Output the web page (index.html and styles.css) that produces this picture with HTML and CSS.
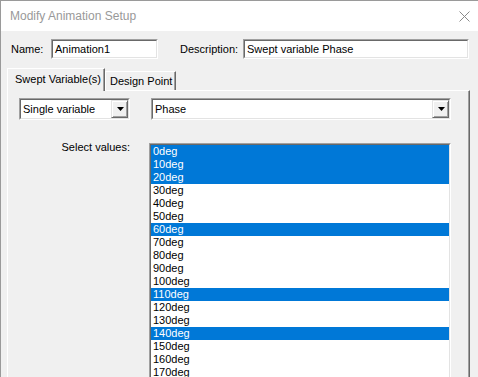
FILE: index.html
```html
<!DOCTYPE html>
<html>
<head>
<meta charset="utf-8">
<link rel="stylesheet" href="styles.css">
</head>
<body>
<div class="window">
  <div class="titlebar">
    <span class="title">Modify Animation Setup</span>
    <svg class="close" width="11" height="11" viewBox="0 0 11 11"><path d="M0.5 0.5 L10.5 10.5 M10.5 0.5 L0.5 10.5" stroke="#8a8a8a" stroke-width="1" fill="none"/></svg>
  </div>
  <div class="content">
    <div class="name-row">
      <span class="lbl name-lbl">Name:</span>
      <div class="sunken field name-field"><div class="sunken-in"><span class="ftext">Animation1</span></div></div>
      <span class="lbl desc-lbl">Description:</span>
      <div class="sunken field desc-field"><div class="sunken-in"><span class="ftext">Swept variable Phase</span></div></div>
    </div>
    <div class="tabs">
      <div class="tab active">Swept Variable(s)</div>
      <div class="tab">Design Point</div>
    </div>
    <div class="panel">
      <div class="combo-row">
        <div class="sunken combo combo1"><div class="sunken-in combo-in"><span class="ctext">Single variable</span><span class="dd"><svg width="7" height="4" viewBox="0 0 7 4"><path d="M0 0 H7 L3.5 4 Z" fill="#000"/></svg></span></div></div>
        <div class="sunken combo combo2"><div class="sunken-in combo-in"><span class="ctext">Phase</span><span class="dd"><svg width="7" height="4" viewBox="0 0 7 4"><path d="M0 0 H7 L3.5 4 Z" fill="#000"/></svg></span></div></div>
      </div>
      <div class="values-row">
        <span class="lbl values-lbl">Select values:</span>
        <div class="sunken listbox"><div class="sunken-in list-in">
          <div class="item sel">0deg</div>
          <div class="item sel">10deg</div>
          <div class="item sel">20deg</div>
          <div class="item">30deg</div>
          <div class="item">40deg</div>
          <div class="item">50deg</div>
          <div class="item sel">60deg</div>
          <div class="item">70deg</div>
          <div class="item">80deg</div>
          <div class="item">90deg</div>
          <div class="item">100deg</div>
          <div class="item sel">110deg</div>
          <div class="item">120deg</div>
          <div class="item">130deg</div>
          <div class="item sel">140deg</div>
          <div class="item">150deg</div>
          <div class="item">160deg</div>
          <div class="item">170deg</div>
          <div class="item">180deg</div>
          <div class="item">190deg</div>
          <div class="item">200deg</div>
        </div></div>
      </div>
    </div>
  </div>
</div>
</body>
</html>
```
FILE: styles.css
```css
html, body {
  margin: 0;
  padding: 0;
  width: 478px;
  height: 377px;
  overflow: hidden;
  background: #f0f0f0;
}
body {
  font-family: "Liberation Sans", Arial, sans-serif;
  font-size: 11px;
  color: #000;
}
.window {
  width: 477px;
  height: 376px;
  border-top: 1px solid #9a9a9a;
  border-left: 1px solid #9a9a9a;
  overflow: hidden;
  background: #f0f0f0;
}
.titlebar {
  height: 30px;
  background: #fff;
  display: flex;
  align-items: center;
  justify-content: space-between;
  padding-left: 9px;
}
.title {
  font-size: 12px;
  line-height: 30px;
  color: #999;
}
.close {
  margin-right: 8px;
  margin-top: 1px;
}
.content {
  padding-top: 8px;
}
.name-row {
  display: flex;
  align-items: center;
  height: 20px;
  padding-left: 10px;
}
.lbl {
  line-height: 13px;
  white-space: nowrap;
}
.name-lbl { width: 40px; flex: none; }
.desc-lbl { width: 63px; flex: none; margin-left: 22px; }
.sunken {
  box-sizing: border-box;
  border: 1px solid;
  border-color: #a0a0a0 #fff #fff #a0a0a0;
  background: #fff;
  flex: none;
}
.sunken-in {
  box-sizing: border-box;
  height: 100%;
  border: 1px solid;
  border-color: #696969 #e3e3e3 #e3e3e3 #696969;
}
.field { height: 20px; }
.name-field { width: 107px; }
.desc-field { width: 226px; }
.ftext {
  display: block;
  line-height: 16px;
  padding-left: 2px;
  white-space: nowrap;
}
.tabs {
  display: flex;
  align-items: flex-start;
  height: 22px;
  margin-top: 9px;
  margin-left: 6px;
  position: relative;
  z-index: 1;
}
.tab {
  box-sizing: border-box;
  background: #f0f0f0;
  border-top: 1px solid #fff;
  border-left: 1px solid #fff;
  border-right: 1px solid #696969;
  box-shadow: inset -1px 0 #a0a0a0;
  white-space: nowrap;
  flex: none;
}
.tab.active {
  width: 98px;
  height: 23px;
  padding: 4px 0 0 7px;
  line-height: 13px;
}
.tab:not(.active) {
  width: 71px;
  height: 19px;
  margin-top: 3px;
  padding: 3px 0 0 4px;
  line-height: 13px;
}
.panel {
  box-sizing: border-box;
  margin-left: 6px;
  width: 463px;
  height: 300px;
  border-top: 1px solid #fff;
  border-left: 1px solid #fff;
  border-right: 1px solid #696969;
  box-shadow: inset -1px 0 #a0a0a0;
  padding: 7px 0 0 11px;
}
.combo-row {
  display: flex;
}
.combo { height: 22px; }
.combo1 { width: 111px; }
.combo2 { width: 300px; margin-left: 21px; }
.combo-in {
  display: flex;
  align-items: stretch;
}
.ctext {
  flex: 1;
  line-height: 18px;
  padding-left: 2px;
  white-space: nowrap;
}
.dd {
  box-sizing: border-box;
  width: 17px;
  flex: none;
  background: #f0f0f0;
  border: 1px solid;
  border-color: #e3e3e3 #696969 #696969 #e3e3e3;
  box-shadow: inset 1px 1px #fff, inset -1px -1px #a0a0a0;
  display: flex;
  align-items: center;
  justify-content: center;
}
.dd svg { display: block; margin-left: 1px; }
.values-row {
  display: flex;
  align-items: flex-start;
  margin-top: 21px;
}
.values-lbl {
  width: 111px;
  text-align: right;
  flex: none;
}
.listbox {
  width: 302px;
  height: 300px;
  margin-left: 19px;
  margin-top: 2px;
}
.list-in { overflow: hidden; }
.item {
  height: 13px;
  line-height: 13px;
  padding-left: 2px;
  white-space: nowrap;
}
.item.sel {
  background: #0078d7;
  color: #fff;
}
```
